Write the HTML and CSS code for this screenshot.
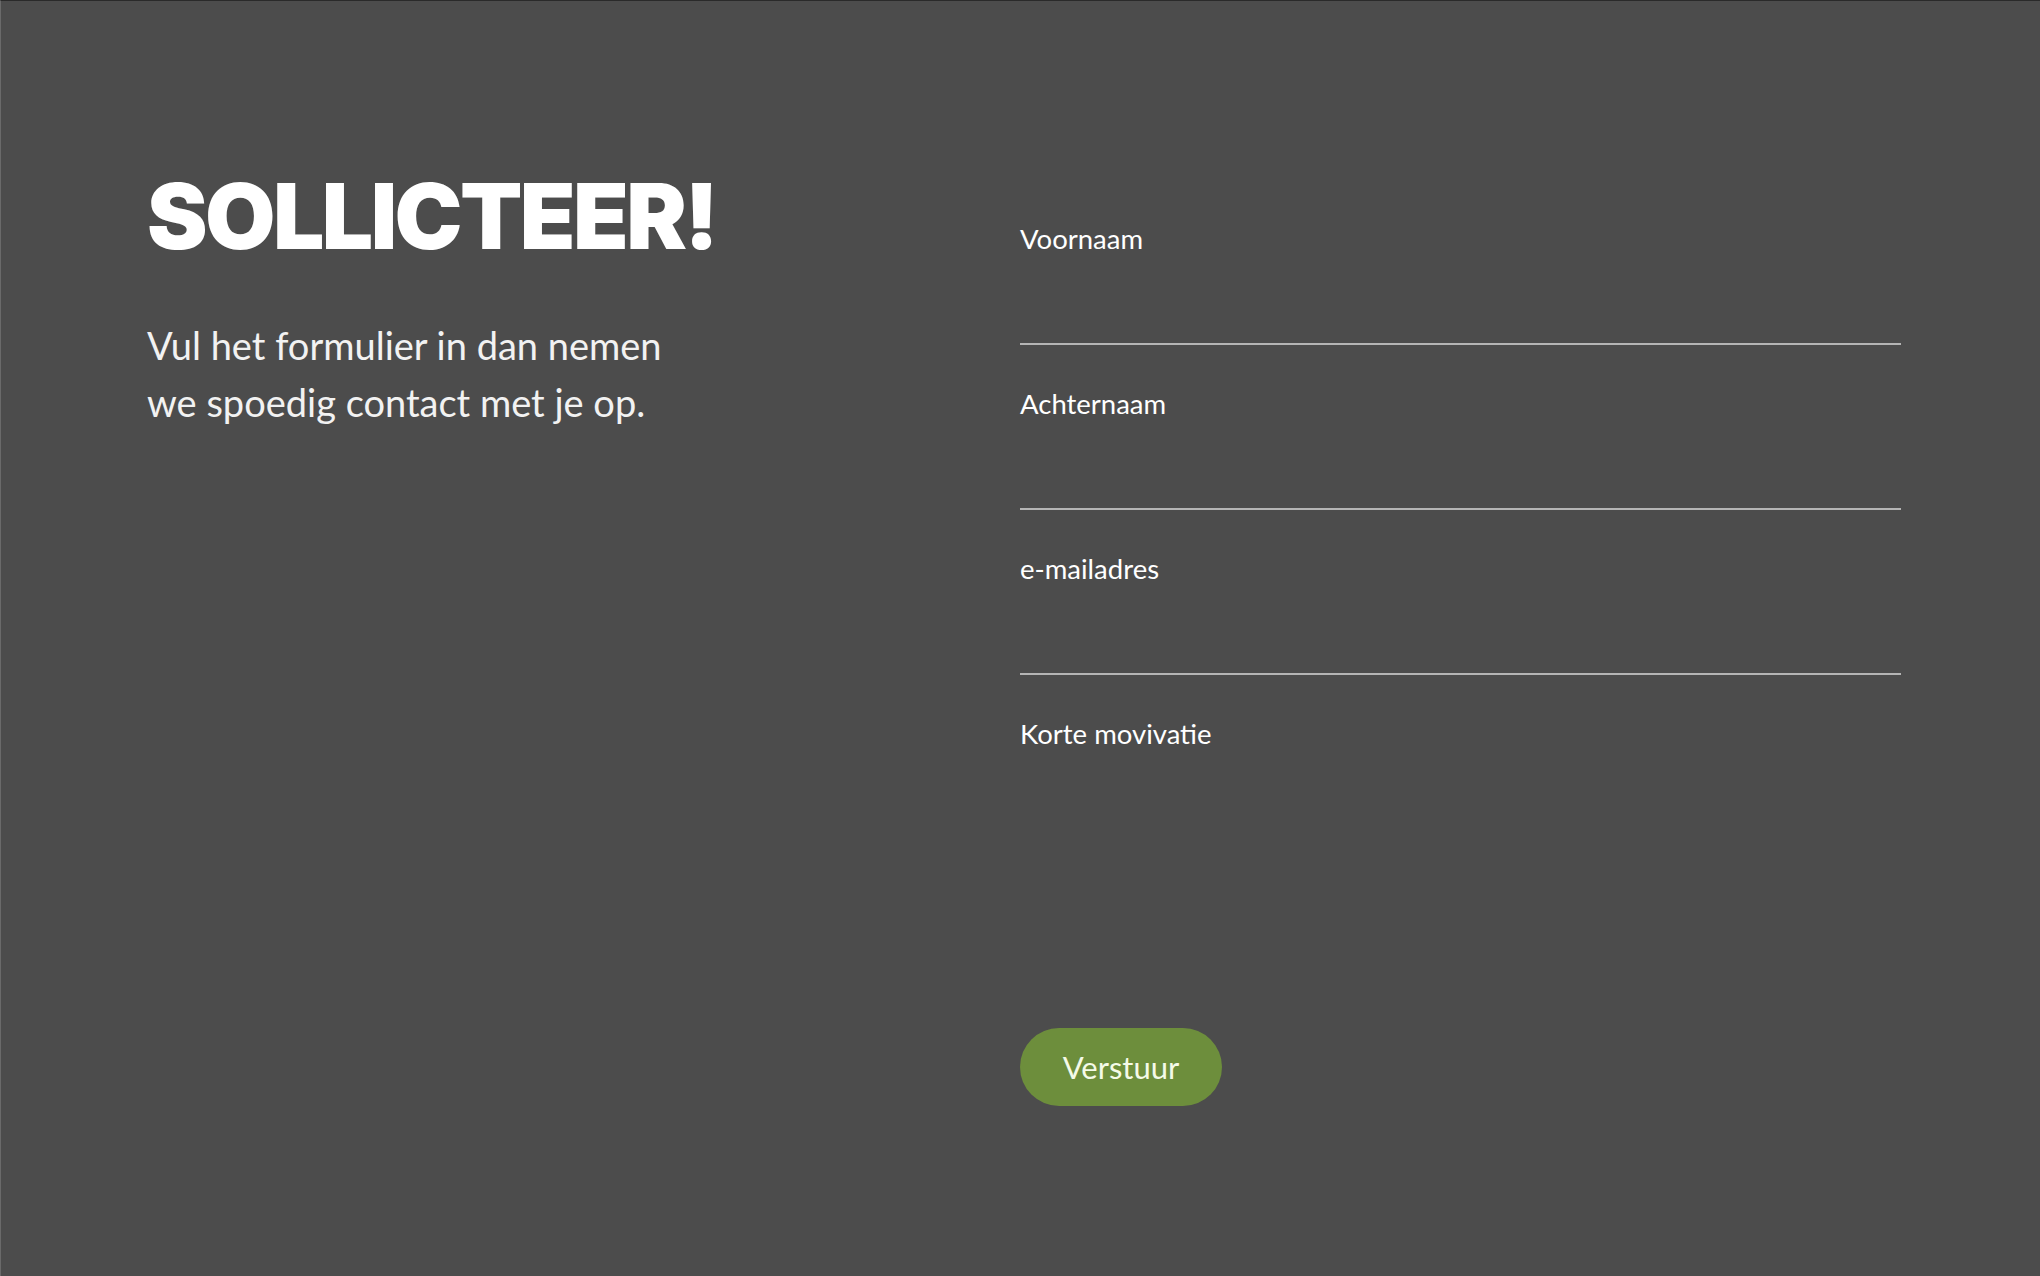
FILE: index.html
```html
<!DOCTYPE html>
<html lang="nl">
<head>
  <meta charset="UTF-8" />
  <meta name="viewport" content="width=device-width, initial-scale=1" />
  <title>Solliciteer</title>
  <link rel="stylesheet" href="styles.css">
</head>
<body>
  <section class="apply">
    <div class="intro">
      <h1>SOLLICTEER!</h1>
      <p>Vul het formulier in dan nemen<br>we spoedig contact met je op.</p>
    </div>

    <form class="apply-form">
      <div class="field">
        <label for="firstName">Voornaam</label>
        <input type="text" id="firstName" />
      </div>
      <div class="field">
        <label for="lastName">Achternaam</label>
        <input type="text" id="lastName" />
      </div>
      <div class="field">
        <label for="email">e-mailadres</label>
        <input type="email" id="email" />
      </div>
      <div class="field">
        <label for="motivation">Korte movivatie</label>
        <textarea id="motivation"></textarea>
      </div>
      <button type="submit">Verstuur</button>
    </form>
  </section>
</body>
</html>
```

FILE: styles.css
```css
* {
  box-sizing: border-box;
}
body {
  margin: 0;
  background: #4c4c4c;
  font-family: 'Lato', 'Noto Sans', sans-serif;
  color: #fff;
}
.apply {
  min-height: 100vh;
  display: grid;
  grid-template-columns: 873px 1fr;
  padding: 0 139px 0 146px;
  border-top: 1px solid #2a2a2a;
  border-left: 1px solid #6a6a6a;
}
.intro {
  padding-top: 170px;
}
h1 {
  margin: 0;
  font-family: 'Inter', 'DejaVu Sans', sans-serif;
  font-weight: 900;
  font-size: 91px;
  line-height: 1;
  letter-spacing: -2.6px;
  color: #fff;
}
.intro p {
  margin: 55px 0 0;
  font-size: 38px;
  line-height: 57px;
  color: #f2f2f2;
}
.apply-form {
  padding-top: 222px;
  display: flex;
  flex-direction: column;
  align-items: flex-start;
}
.field {
  width: 100%;
  margin-bottom: 43px;
}
label {
  display: block;
  font-size: 27.5px;
  line-height: 32px;
  color: #fff;
}
input,
textarea {
  display: block;
  width: 100%;
  background: transparent;
  border: none;
  color: #fff;
  font: inherit;
  font-size: 26px;
  outline: none;
}
input {
  height: 90px;
  border-bottom: 2px solid #b5b5b5;
}
textarea {
  height: 235px;
  resize: none;
}
button {
  width: 202px;
  height: 78px;
  border: none;
  border-radius: 39px;
  background: #6d8e3c;
  color: #f4fae8;
  font-family: 'Lato', 'Noto Sans', sans-serif;
  font-size: 31px;
  cursor: pointer;
}
```
